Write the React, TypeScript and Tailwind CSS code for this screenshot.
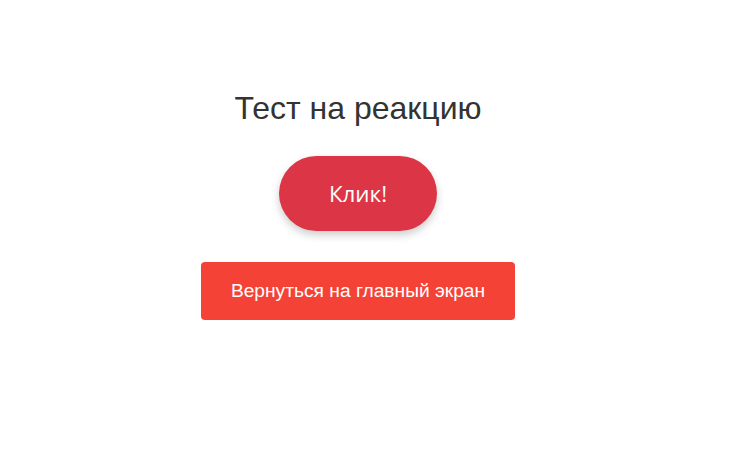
export default function App() {
  return (
    <div className="w-[716px] h-[471px] bg-white flex flex-col items-center">
      <h1 className="mt-[88px] text-[32px] leading-[40px] text-[#333] font-normal font-['Liberation_Sans',Arial,sans-serif]">
        Тест на реакцию
      </h1>
      <button className="mt-[28px] w-[158px] h-[75px] rounded-full bg-[#dc3545] text-white text-[22.4px] font-['Open_Sans',sans-serif] shadow-[0_4px_8px_rgba(0,0,0,0.2)]">
        Клик!
      </button>
      <button className="mt-[31px] w-[314px] h-[58px] rounded-[4px] bg-[#f44336] text-white text-[19.2px] font-['Liberation_Sans',Arial,sans-serif]">
        Вернуться на главный экран
      </button>
    </div>
  );
}
